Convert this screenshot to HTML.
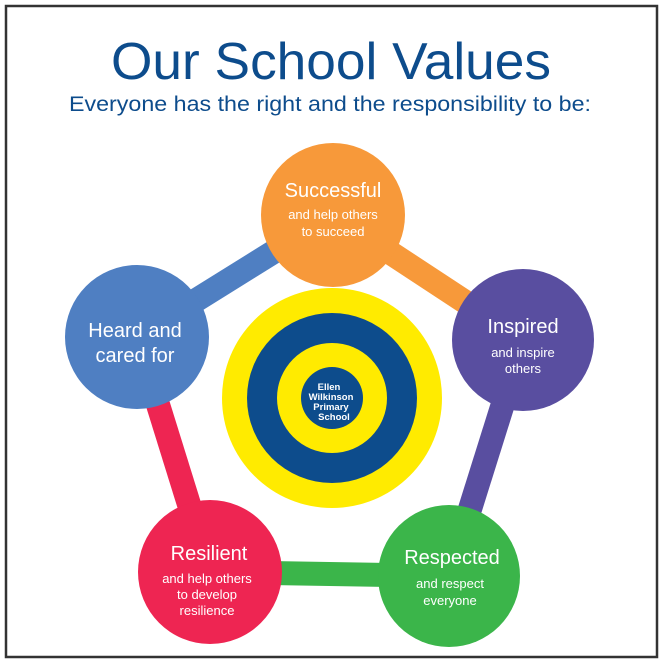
<!DOCTYPE html>
<html><head><style>
body{margin:0;width:662px;height:663px;background:#fff;overflow:hidden;font-family:"Liberation Sans",sans-serif}
</style></head><body>
<svg width="662" height="663" xmlns="http://www.w3.org/2000/svg">
<rect x="6" y="6" width="651" height="651" fill="#fff" stroke="#333" stroke-width="2.5"/>
<text x="331" y="79" text-anchor="middle" font-size="52" fill="#0d4c8c" font-family="Liberation Sans" textLength="440" lengthAdjust="spacingAndGlyphs">Our School Values</text>
<text x="330" y="111" text-anchor="middle" font-size="21" fill="#0d4c8c" font-family="Liberation Sans" textLength="522" lengthAdjust="spacingAndGlyphs">Everyone has the right and the responsibility to be:</text>
<g stroke-width="24" stroke-linecap="butt">
<line x1="333" y1="215" x2="137" y2="337" stroke="#4f7fc2"/>
<line x1="333" y1="215" x2="523" y2="340" stroke="#f7993a"/>
<line x1="523" y1="340" x2="449" y2="576" stroke="#594ea0"/>
<line x1="449" y1="576" x2="210" y2="572" stroke="#3bb54a"/>
<line x1="210" y1="572" x2="137" y2="337" stroke="#ee2552"/>
</g>
<circle cx="333" cy="215" r="72" fill="#f7993a"/>
<circle cx="523" cy="340" r="71" fill="#594ea0"/>
<circle cx="449" cy="576" r="71" fill="#3bb54a"/>
<circle cx="210" cy="572" r="72" fill="#ee2552"/>
<circle cx="137" cy="337" r="72" fill="#4f7fc2"/>
<circle cx="332" cy="398" r="110" fill="#ffeb00"/>
<circle cx="332" cy="398" r="85" fill="#0d4c8c"/>
<circle cx="332" cy="398" r="55" fill="#ffeb00"/>
<circle cx="332" cy="398" r="31" fill="#0d4c8c"/>
<g fill="#fff" font-size="9.5" font-weight="bold" text-anchor="middle" font-family="Liberation Sans">
<text x="329" y="390">Ellen</text><text x="331" y="400">Wilkinson</text><text x="331" y="410">Primary</text><text x="334" y="420">School</text>
</g>
<g fill="#fff" text-anchor="middle" font-family="Liberation Sans">
<text x="333" y="197" font-size="20">Successful</text>
<text x="333" y="219" font-size="13">and help others</text>
<text x="333" y="236" font-size="13">to succeed</text>
<text x="523" y="333" font-size="20">Inspired</text>
<text x="523" y="357" font-size="13">and inspire</text>
<text x="523" y="373" font-size="13">others</text>
<text x="452" y="564" font-size="20">Respected</text>
<text x="450" y="588" font-size="13">and respect</text>
<text x="450" y="605" font-size="13">everyone</text>
<text x="209" y="560" font-size="20">Resilient</text>
<text x="207" y="583" font-size="13">and help others</text>
<text x="207" y="599" font-size="13">to develop</text>
<text x="207" y="615" font-size="13">resilience</text>
<text x="135" y="337" font-size="20">Heard and</text>
<text x="135" y="362" font-size="20">cared for</text>
</g>
</svg>
</body></html>
